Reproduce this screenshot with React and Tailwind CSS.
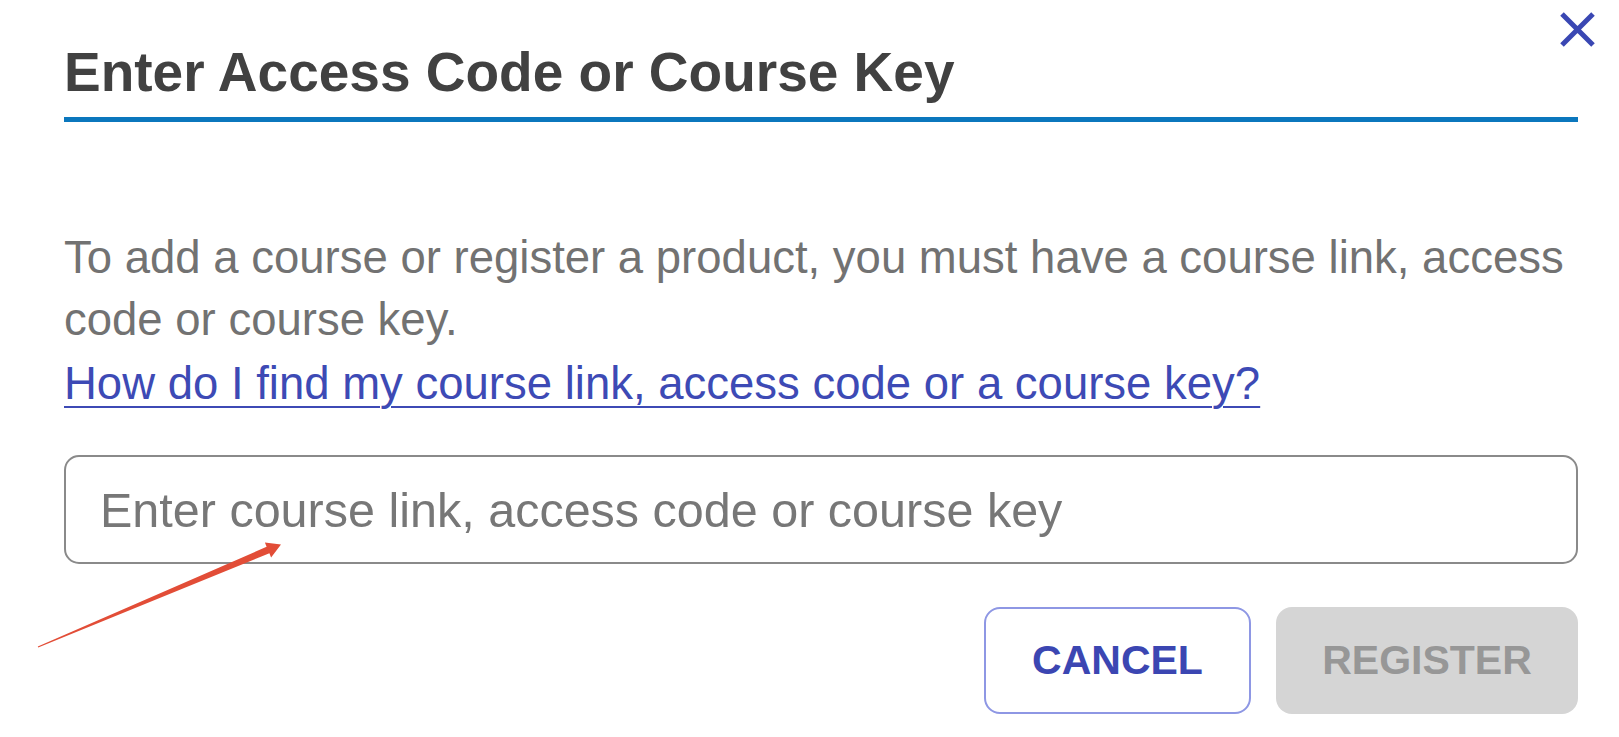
import { useState } from "react"

function CloseIcon() {
    return (
        <svg width="37" height="37" viewBox="0 0 37 37" fill="none">
            <path d="M3 3L34 34M34 3L3 34" stroke="#3a47b3" strokeWidth="5" />
        </svg>
    )
}

// red annotation arrow drawn over the input
function PointerArrow() {
    return (
        <svg className="absolute left-0 top-0 pointer-events-none" width="320" height="700" viewBox="0 0 320 700">
            <polygon
                points="37.8,646.5 266.6,546.8 264.9,542.6 281,544.5 271.1,557.4 269.4,553.2 38.2,647.5"
                fill="#e24d37"
            />
        </svg>
    )
}

export default function App() {
    const [code, setCode] = useState("")

    return (
        <div
            className="relative min-h-screen bg-white pl-[64px] pr-[41px] pt-[45px]"
            style={{ fontFamily: '"Liberation Sans", Arial, sans-serif' }}
        >
            <button className="absolute right-[23px] top-[11px] w-[37px] h-[37px]">
                <CloseIcon />
            </button>

            <div className="border-b-[5px] border-[#0b77bd] pb-[17px]">
                <h1 className="text-[55px] leading-none font-bold text-[#414141]">
                    Enter Access Code or Course Key
                </h1>
            </div>

            <p className="mt-[105px] text-[45.5px] leading-[62px] text-[#727272]">
                To add a course or register a product, you must have a course link, access code or course key.
            </p>
            <a
                href="#"
                className="block mt-[2px] text-[45.5px] leading-[62px] text-[#3d4ab5] underline decoration-2 underline-offset-[7px]"
            >
                How do I find my course link, access code or a course key?
            </a>

            <input
                value={code}
                onChange={(e) => setCode(e.target.value)}
                placeholder="Enter course link, access code or course key"
                className="mt-[40px] block w-full h-[109px] border-2 border-[#8a8a8a] rounded-[15px] px-[34px] text-[48.5px] text-[#333] placeholder:text-[#777777] outline-none"
            />

            <div className="mt-[43px] flex justify-end gap-[25px]">
                <button className="w-[267px] h-[107px] border-2 border-[#8e97e4] rounded-[16px] text-[41px] font-bold text-[#3b46b2]">
                    CANCEL
                </button>
                <button
                    disabled={!code}
                    className="w-[302px] h-[107px] bg-[#d5d5d5] rounded-[16px] text-[41px] font-bold text-[#979797]"
                >
                    REGISTER
                </button>
            </div>

            <PointerArrow />
        </div>
    )
}
